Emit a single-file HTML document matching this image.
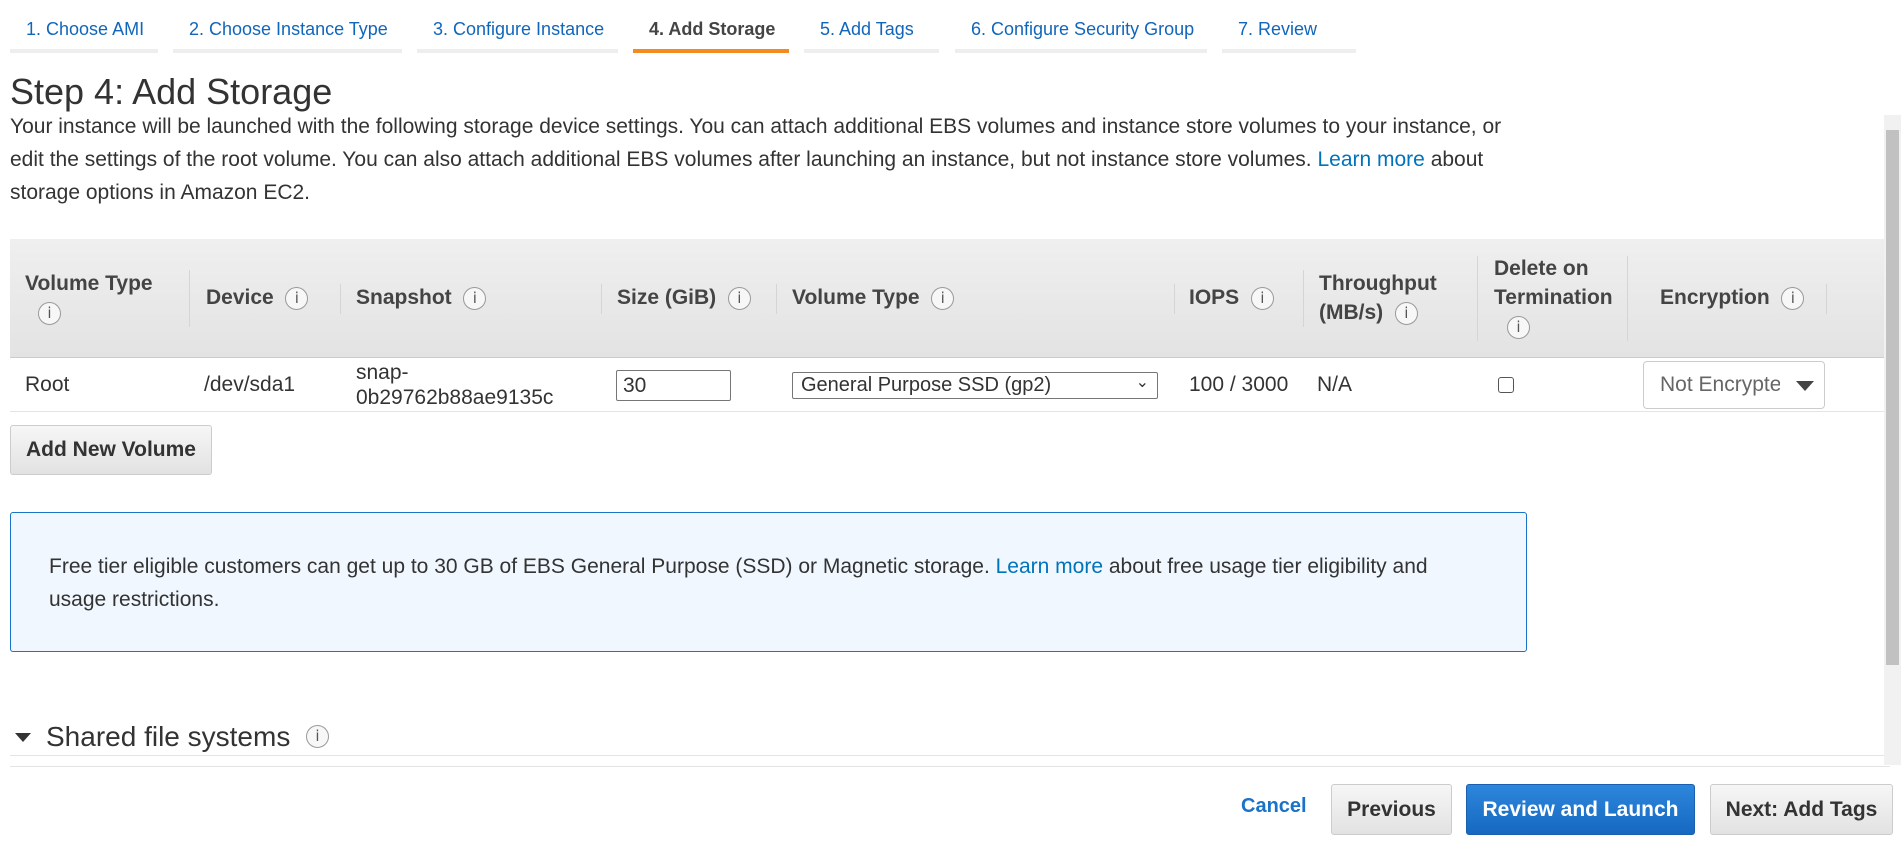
<!DOCTYPE html>
<html><head><meta charset="utf-8"><style>
*{box-sizing:border-box;margin:0;padding:0}
body{width:1901px;height:844px;overflow:hidden;background:#fff;font-family:"Liberation Sans",Arial,sans-serif;font-size:21px;color:#333;position:relative}
.a{position:absolute;white-space:nowrap}
.tab{position:absolute;top:0;height:53px;border-bottom:4px solid #eee;color:#1166bb;font-size:18px;padding-top:19px;padding-left:16px;white-space:nowrap}
.tab.on{border-bottom-color:#f58b1f;color:#444;font-weight:bold}
.lnk{color:#0073bb}
.th{position:absolute;font-weight:bold;color:#444;font-size:21px;line-height:29px;white-space:nowrap}
.sep{position:absolute;width:1px;background:#d5d5d5}
.i{display:inline-block;width:23px;height:23px;border:1.5px solid #999;border-radius:50%;font-family:"DejaVu Sans",sans-serif;font-size:15px;line-height:20px;text-align:center;color:#555;font-weight:normal;vertical-align:middle;background:#f7f7f7}
.btn{position:absolute;border:1px solid #ccc;border-radius:3px;background:linear-gradient(#f6f6f6,#e2e2e2);font-weight:bold;color:#333;font-size:21px;text-align:center;white-space:nowrap}
</style></head><body>
<div class="tab" style="left:10px;width:148px">1. Choose AMI</div>
<div class="tab" style="left:173px;width:229px">2. Choose Instance Type</div>
<div class="tab" style="left:417px;width:201px">3. Configure Instance</div>
<div class="tab on" style="left:633px;width:156px">4. Add Storage</div>
<div class="tab" style="left:804px;width:135px">5. Add Tags</div>
<div class="tab" style="left:955px;width:252px">6. Configure Security Group</div>
<div class="tab" style="left:1222px;width:134px">7. Review</div>

<div class="a" style="left:10px;top:71px;font-size:36px;color:#333">Step 4: Add Storage</div>
<div class="a" style="left:10px;top:110px;line-height:33px;font-size:21px;color:#333">Your instance will be launched with the following storage device settings. You can attach additional EBS volumes and instance store volumes to your instance, or<br>edit the settings of the root volume. You can also attach additional EBS volumes after launching an instance, but not instance store volumes. <span class="lnk">Learn more</span> about<br>storage options in Amazon EC2.</div>

<div class="a" style="left:1884px;top:115px;width:17px;height:650px;background:#f1f1f1"></div>
<div class="a" style="left:1886px;top:130px;width:13px;height:535px;background:#c1c1c1"></div>

<div class="a" style="left:10px;top:239px;width:1874px;height:119px;background:linear-gradient(#efefef,#e3e3e3);border-bottom:1px solid #ccc"></div>
<div class="sep" style="left:189px;top:270px;height:57px"></div>
<div class="sep" style="left:340px;top:284px;height:30px"></div>
<div class="sep" style="left:601px;top:284px;height:30px"></div>
<div class="sep" style="left:776px;top:284px;height:30px"></div>
<div class="sep" style="left:1174px;top:284px;height:30px"></div>
<div class="sep" style="left:1303px;top:270px;height:57px"></div>
<div class="sep" style="left:1477px;top:256px;height:85px"></div>
<div class="sep" style="left:1627px;top:256px;height:85px"></div>
<div class="sep" style="left:1826px;top:284px;height:30px"></div>

<div class="th" style="left:25px;top:269px">Volume Type<br><span class="i" style="margin-left:13px">i</span></div>
<div class="th" style="left:206px;top:283px">Device &nbsp;<span class="i">i</span></div>
<div class="th" style="left:356px;top:283px">Snapshot &nbsp;<span class="i">i</span></div>
<div class="th" style="left:617px;top:283px">Size (GiB) &nbsp;<span class="i">i</span></div>
<div class="th" style="left:792px;top:283px">Volume Type &nbsp;<span class="i">i</span></div>
<div class="th" style="left:1189px;top:283px">IOPS &nbsp;<span class="i">i</span></div>
<div class="th" style="left:1319px;top:269px">Throughput<br>(MB/s) &nbsp;<span class="i">i</span></div>
<div class="th" style="left:1494px;top:254px">Delete on<br>Termination<br><span class="i" style="margin-left:13px">i</span></div>
<div class="th" style="left:1660px;top:283px">Encryption &nbsp;<span class="i">i</span></div>

<div class="a" style="left:10px;top:411px;width:1874px;height:1px;background:#e4e4e4"></div>
<div class="a" style="left:25px;top:373px">Root</div>
<div class="a" style="left:204px;top:373px">/dev/sda1</div>
<div class="a" style="left:356px;top:360px;line-height:25px">snap-<br>0b29762b88ae9135c</div>
<div class="a" style="left:616px;top:370px;width:115px;height:31px;border:1px solid #767676;border-radius:2px;padding:3px 6px">30</div>
<div class="a" style="left:792px;top:372px;width:366px;height:27px;border:1px solid #767676;border-radius:2px;padding:1px 8px;font-size:20px">General Purpose SSD (gp2)<span style="position:absolute;right:8px;top:-1px;font-size:16px">&#8964;</span></div>
<div class="a" style="left:1189px;top:373px">100 / 3000</div>
<div class="a" style="left:1317px;top:373px">N/A</div>
<div class="a" style="left:1498px;top:377px;width:16px;height:16px;border:1.5px solid #555;border-radius:3px"></div>
<div class="a" style="left:1643px;top:361px;width:182px;height:48px;border:1px solid #ccc;border-radius:4px;padding:11px 16px;color:#666;overflow:hidden"><span style="display:inline-block;width:120px;overflow:hidden">Not Encrypted</span></div>
<div class="a" style="left:1796px;top:381px;width:0;height:0;border-left:9px solid transparent;border-right:9px solid transparent;border-top:10px solid #444"></div>

<div class="btn" style="left:10px;top:425px;width:202px;height:50px;line-height:48px">Add New Volume</div>

<div class="a" style="left:10px;top:512px;width:1517px;height:140px;background:#f0f7fe;border:1px solid #1a73c8;border-radius:3px"></div>
<div class="a" style="left:49px;top:550px;line-height:33px;font-size:21px;color:#333">Free tier eligible customers can get up to 30 GB of EBS General Purpose (SSD) or Magnetic storage. <span class="lnk">Learn more</span> about free usage tier eligibility and<br>usage restrictions.</div>

<div class="a" style="left:15px;top:733px;width:0;height:0;border-left:8px solid transparent;border-right:8px solid transparent;border-top:9px solid #333"></div>
<div class="a" style="left:46px;top:721px;font-size:28px;color:#333">Shared file systems</div>
<div class="a" style="left:306px;top:724px"><span class="i">i</span></div>
<div class="a" style="left:10px;top:755px;width:1874px;height:1px;background:#e4e4e4"></div>
<div class="a" style="left:10px;top:766px;width:1880px;height:1px;background:#e4e4e4"></div>

<div class="a" style="left:1241px;top:795px;font-weight:bold;color:#1a73c8;font-size:20px">Cancel</div>
<div class="btn" style="left:1331px;top:784px;width:121px;height:51px;line-height:49px">Previous</div>
<div class="btn" style="left:1466px;top:784px;width:229px;height:51px;line-height:49px;background:linear-gradient(#2d87dc,#1668c0);border-color:#1a5fb0;color:#fff">Review and Launch</div>
<div class="btn" style="left:1710px;top:784px;width:183px;height:51px;line-height:49px">Next: Add Tags</div>
</body></html>
